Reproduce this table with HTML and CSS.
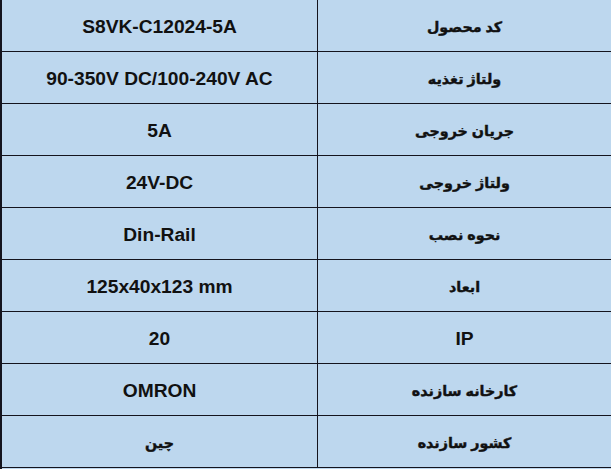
FILE: index.html
```html
<!DOCTYPE html>
<html lang="fa">
<head>
<meta charset="utf-8">
<title>مشخصات</title>
<link rel="stylesheet" href="styles.css">
</head>
<body>
<div class="spec">
  <div class="row"><div class="val">S8VK-C12024-5A</div><div class="key">کد محصول</div></div>
  <div class="row"><div class="val">90-350V DC/100-240V AC</div><div class="key">ولتاژ تغذیه</div></div>
  <div class="row"><div class="val">5A</div><div class="key">جریان خروجی</div></div>
  <div class="row"><div class="val">24V-DC</div><div class="key">ولتاژ خروجی</div></div>
  <div class="row"><div class="val">Din-Rail</div><div class="key">نحوه نصب</div></div>
  <div class="row"><div class="val">125x40x123 mm</div><div class="key">ابعاد</div></div>
  <div class="row"><div class="val">20</div><div class="key latin">IP</div></div>
  <div class="row"><div class="val">OMRON</div><div class="key">کارخانه سازنده</div></div>
  <div class="row"><div class="val fa">چین</div><div class="key">کشور سازنده</div></div>
</div>
</body>
</html>
```
FILE: styles.css
```css
html, body {
  margin: 0;
  padding: 0;
  background: #ffffff;
}
.spec {
  width: 611px;
  height: 469px;
  box-sizing: border-box;
  background: #bdd7ee;
  border-left: 2px solid #14141e;
  display: flex;
  flex-direction: column;
  font-family: "Liberation Sans", Arial, "DejaVu Sans", sans-serif;
  font-weight: bold;
  color: #111111;
}
.row {
  height: 52px;
  flex: none;
  box-sizing: border-box;
  border-bottom: 1px solid #14141e;
  display: grid;
  grid-template-columns: 316px 1fr;
}
.val, .key {
  display: flex;
  align-items: center;
  justify-content: center;
  padding-top: 3px;
}
.val {
  font-size: 19.2px;
  border-right: 1px solid #14141e;
}
.key {
  direction: rtl;
  font-size: 14.3px;
  -webkit-text-stroke: 0.4px #111111;
}
.key.latin {
  direction: ltr;
  font-size: 19.2px;
  -webkit-text-stroke: 0;
}
.val.fa {
  direction: rtl;
  font-size: 14.3px;
  -webkit-text-stroke: 0.4px #111111;
}
```
